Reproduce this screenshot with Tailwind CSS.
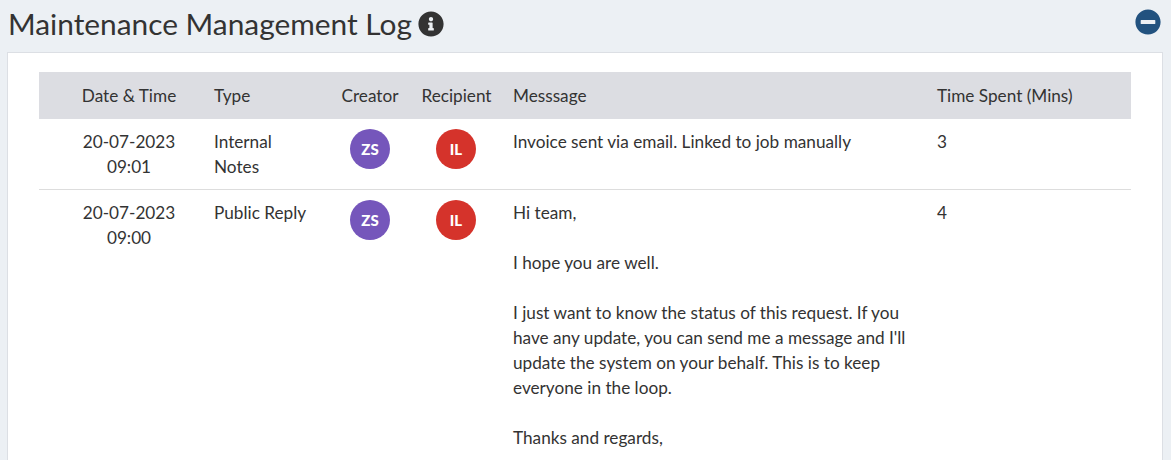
<!DOCTYPE html>
<html>

<head>
  <meta charset="UTF-8" />
  <meta name="viewport" content="width=device-width, initial-scale=1.0" />
  <script src="https://cdn.jsdelivr.net/npm/@tailwindcss/browser@4"></script>
</head>

<body class="h-[460px] overflow-hidden bg-[#ecf0f4] font-['Lato',sans-serif] text-[#333333]">
  <!-- Section heading -->
  <div class="h-[52px] pl-2 pr-[10px] flex items-start justify-between">
    <div class="flex items-center gap-[6px] pt-[6px]">
      <h2 class="text-[29.85px] leading-[36px] text-[#333]">Maintenance Management Log</h2>
      <svg class="w-[26px] h-[26px] fill-[#333]" viewBox="0 0 512 512">
        <path d="M256 8C119.043 8 8 119.083 8 256c0 136.997 111.043 248 248 248s248-111.003 248-248C504 119.083 392.957 8 256 8zm0 110c23.196 0 42 18.804 42 42s-18.804 42-42 42-42-18.804-42-42 18.804-42 42-42zm56 254c0 6.627-5.373 12-12 12h-88c-6.627 0-12-5.373-12-12v-24c0-6.627 5.373-12 12-12h12v-64h-12c-6.627 0-12-5.373-12-12v-24c0-6.627 5.373-12 12-12h64c6.627 0 12 5.373 12 12v100h12c6.627 0 12 5.373 12 12v24z" />
      </svg>
    </div>
    <svg class="w-[26px] h-[26px] mt-[9px] fill-[#22527f]" viewBox="0 0 512 512">
      <path d="M256 8C119 8 8 119 8 256s111 248 248 248 248-111 248-248S393 8 256 8zM124 296c-6.6 0-12-5.4-12-12v-56c0-6.6 5.4-12 12-12h264c6.6 0 12 5.4 12 12v56c0 6.6-5.4 12-12 12H124z" />
    </svg>
  </div>

  <!-- Log card -->
  <div class="ml-[7px] mr-[8px] bg-white border border-b-0 border-[#dcdfe4] pt-[19px] pl-[31px] pr-[31px] h-[408px] overflow-hidden">
    <table class="table-fixed w-[1092px] text-[17.2px] leading-[25px] border-collapse">
      <colgroup>
        <col class="w-[165px]" />
        <col class="w-[126px]" />
        <col class="w-[80px]" />
        <col class="w-[93px]" />
        <col class="w-[424px]" />
        <col class="w-[204px]" />
      </colgroup>
      <thead>
        <tr class="bg-[#dcdde2] h-[47px] text-left">
          <th class="font-normal pl-[25px] pr-[10px] text-center">Date &amp; Time</th>
          <th class="font-normal px-[10px]">Type</th>
          <th class="font-normal text-center whitespace-nowrap">Creator</th>
          <th class="font-normal text-center whitespace-nowrap">Recipient</th>
          <th class="font-normal px-[10px]">Messsage</th>
          <th class="font-normal px-[10px] whitespace-nowrap">Time Spent (Mins)</th>
        </tr>
      </thead>
      <tbody>
        <tr class="border-b border-[#dddddd] align-top">
          <td class="pl-[25px] pr-[10px] pt-[10px] pb-[10px] text-center">20-07-2023<br />09:01</td>
          <td class="px-[10px] pt-[10px] pb-[10px]">Internal<br />Notes</td>
          <td class="pt-[10px]">
            <div class="mx-auto w-10 h-10 rounded-full bg-[#7556bb] flex items-center justify-center text-white text-[15px] font-black">ZS</div>
          </td>
          <td class="pt-[10px] pr-[1px]">
            <div class="mx-auto w-10 h-10 rounded-full bg-[#d5332b] flex items-center justify-center text-white text-[15px] font-black">IL</div>
          </td>
          <td class="px-[10px] pt-[10px]">Invoice sent via email. Linked to job manually</td>
          <td class="px-[10px] pt-[10px]">3</td>
        </tr>
        <tr class="align-top">
          <td class="pl-[25px] pr-[10px] pt-[10px] text-center">20-07-2023<br />09:00</td>
          <td class="px-[10px] pt-[10px]">Public Reply</td>
          <td class="pt-[10px]">
            <div class="mx-auto w-10 h-10 rounded-full bg-[#7556bb] flex items-center justify-center text-white text-[15px] font-black">ZS</div>
          </td>
          <td class="pt-[10px] pr-[1px]">
            <div class="mx-auto w-10 h-10 rounded-full bg-[#d5332b] flex items-center justify-center text-white text-[15px] font-black">IL</div>
          </td>
          <td class="px-[10px] pt-[10px]">
            <p>Hi team,</p>
            <p class="mt-[25px]">I hope you are well.</p>
            <p class="mt-[25px]">I just want to know the status of this request. If you have any update, you can send me a message and I'll update the system on your behalf. This is to keep everyone in the loop.</p>
            <p class="mt-[25px]">Thanks and regards,</p>
          </td>
          <td class="px-[10px] pt-[10px]">4</td>
        </tr>
      </tbody>
    </table>
  </div>
</body>

</html>
